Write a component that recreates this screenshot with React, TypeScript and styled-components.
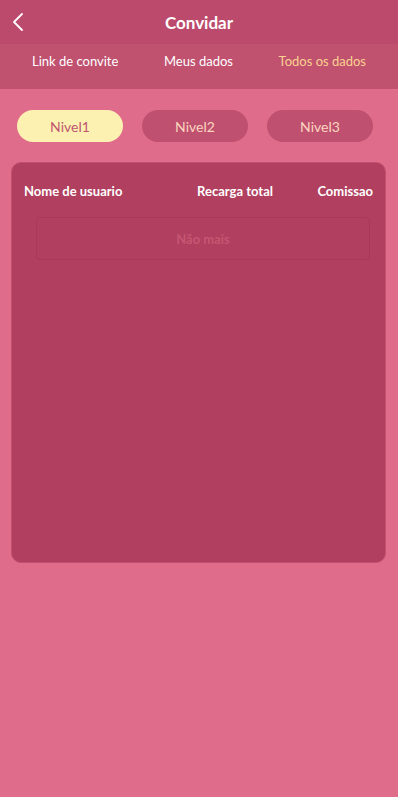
import React, { useState } from 'react'
import styled, { createGlobalStyle } from 'styled-components'

const GlobalStyle = createGlobalStyle`
    html, body {
        margin: 0;
        padding: 0;
        background: #e06c8b;
        font-family: Lato, "Noto Sans", sans-serif;
    }
    * {
        box-sizing: border-box;
    }
`

const tabs = ['Link de convite', 'Meus dados', 'Todos os dados']
const levels = ['Nivel1', 'Nivel2', 'Nivel3']

export default function App() {
    const [level, setLevel] = useState(0)

    return (
        <Page>
            <GlobalStyle />
            <Header>
                <BackButton aria-label='voltar'>
                    <svg width='12' height='20' viewBox='0 0 12 20' fill='none'>
                        <path d='M10 2 L2 10 L10 18' stroke='#fff' strokeWidth='1.8' strokeLinecap='round' strokeLinejoin='round' />
                    </svg>
                </BackButton>
                <Title>Convidar</Title>
            </Header>
            <TabBar>
                {tabs.map((t, i) => (
                    <Tab key={t} $active={i === 2}>{t}</Tab>
                ))}
            </TabBar>
            <Levels>
                {levels.map((l, i) => (
                    <Pill key={l} $active={i === level} onClick={() => setLevel(i)}>{l}</Pill>
                ))}
            </Levels>
            <Card>
                <TableHead>
                    <HeadCell>Nome de usuario</HeadCell>
                    <HeadCell $align='right'>Recarga total</HeadCell>
                    <HeadCell $align='right'>Comissao</HeadCell>
                </TableHead>
                <Empty>Não mais</Empty>
            </Card>
        </Page>
    )
}

const Page = styled.div`
    min-height: 797px;
    background: #e06c8b;
    display: flex;
    flex-direction: column;
`

const Header = styled.div`
    height: 44px;
    background: #bb4a6c;
    display: flex;
    align-items: center;
    justify-content: center;
    position: relative;
`

const BackButton = styled.button`
    position: absolute;
    left: 12px;
    top: 12px;
    background: none;
    border: none;
    padding: 0;
    display: flex;
`

const Title = styled.div`
    color: #fff;
    font-size: 17px;
    font-weight: 700;
`

const TabBar = styled.div`
    height: 45px;
    background: #c0516f;
    display: flex;
    align-items: center;
    justify-content: space-between;
    padding: 0 32px 12px 32px;
`

const Tab = styled.div<{ $active?: boolean }>`
    font-size: 13px;
    color: ${p => (p.$active ? '#fbd18f' : '#fff')};
`

const Levels = styled.div`
    display: flex;
    justify-content: space-between;
    padding: 21px 25px 20px 17px;
`

const Pill = styled.div<{ $active?: boolean }>`
    width: 106px;
    height: 32px;
    border-radius: 16px;
    display: flex;
    align-items: center;
    justify-content: center;
    font-size: 14px;
    cursor: pointer;
    background: ${p => (p.$active ? '#fdf1b2' : '#c0506f')};
    color: ${p => (p.$active ? '#c0566f' : '#fbd6c0')};
`

const Card = styled.div`
    margin: 0 12px 0 11px;
    height: 401px;
    background: #b13f5f;
    border-radius: 10px;
    border: 1px solid #c14f6f;
    padding: 20px 12px 0 12px;
`

const TableHead = styled.div`
    display: grid;
    grid-template-columns: 1fr 1fr 100px;
    color: #fff;
    font-size: 13px;
    font-weight: 700;
`

const HeadCell = styled.div<{ $align?: string }>`
    text-align: ${p => p.$align || 'left'};
`

const Empty = styled.div`
    margin: 18px 3px 0 12px;
    height: 43px;
    border: 1px solid #a8395a;
    border-radius: 4px;
    display: flex;
    align-items: center;
    justify-content: center;
    color: #c55673;
    font-size: 13px;
    font-weight: 700;
`
